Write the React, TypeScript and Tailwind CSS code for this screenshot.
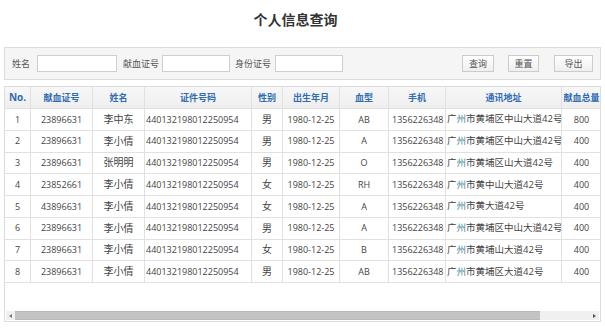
import clsx from "clsx";

type Donor = {
  no: number;
  card: string;
  name: string;
  idNo: string;
  sex: string;
  birth: string;
  blood: string;
  phone: string;
  address: string;
  total: number;
};

const donors: Donor[] = [
  { no: 1, card: "23896631", name: "李中东", idNo: "440132198012250954", sex: "男", birth: "1980-12-25", blood: "AB", phone: "1356226348", address: "广州市黄埔区中山大道42号", total: 800 },
  { no: 2, card: "23896631", name: "李小倩", idNo: "440132198012250954", sex: "男", birth: "1980-12-25", blood: "A", phone: "1356226348", address: "广州市黄埔区中山大道42号", total: 400 },
  { no: 3, card: "23896631", name: "张明明", idNo: "440132198012250954", sex: "男", birth: "1980-12-25", blood: "O", phone: "1356226348", address: "广州市黄埔区山大道42号", total: 400 },
  { no: 4, card: "23852661", name: "李小倩", idNo: "440132198012250954", sex: "女", birth: "1980-12-25", blood: "RH", phone: "1356226348", address: "广州市黄中山大道42号", total: 400 },
  { no: 5, card: "43896631", name: "李小倩", idNo: "440132198012250954", sex: "女", birth: "1980-12-25", blood: "A", phone: "1356226348", address: "广州市黄大道42号", total: 400 },
  { no: 6, card: "23896631", name: "李小倩", idNo: "440132198012250954", sex: "男", birth: "1980-12-25", blood: "A", phone: "1356226348", address: "广州市黄埔区中山大道42号", total: 400 },
  { no: 7, card: "23896631", name: "李小倩", idNo: "440132198012250954", sex: "女", birth: "1980-12-25", blood: "B", phone: "1356226348", address: "广州市黄埔山大道42号", total: 400 },
  { no: 8, card: "23896631", name: "李小倩", idNo: "440132198012250954", sex: "男", birth: "1980-12-25", blood: "AB", phone: "1356226348", address: "广州市黄埔区大道42号", total: 400 },
];

const headers = ["No.", "献血证号", "姓名", "证件号码", "性别", "出生年月", "血型", "手机", "通讯地址", "献血总量"];

// column widths taken from the border positions in the screenshot
const cols = "grid grid-cols-[26px_62px_52px_107px_31px_57px_49px_57px_116px_40px] w-[597px]";

const cell = "flex items-center justify-center border-r border-b border-[#e1e1e1] whitespace-nowrap overflow-hidden";

const Field = ({ label, width, gap }: { label: string; width: string; gap: string }) => (
  <>
    <span className={clsx("text-[9px] text-[#555]", gap)}>{label}</span>
    <input
      className={clsx("h-[17px] border border-[#cfcfcf] bg-white outline-none", width)}
      type="text"
    />
  </>
);

const Button = ({ label, className }: { label: string; className: string }) => (
  <button
    className={clsx(
      "h-[17px] border border-[#cccccc] bg-gradient-to-b from-white to-[#efefef] text-[9px] text-[#555] flex items-center justify-center",
      className
    )}
  >
    {label}
  </button>
);

const Address = ({ text }: { text: string }) => (
  <span className="text-[9.5px]">
    {text[0]}
    <span className="text-[#3b8a96]">{text[1]}</span>
    {text.slice(2)}
  </span>
);

export default function App() {
  return (
    <div className="w-[605px] h-[328px] bg-white overflow-hidden text-[#444] font-['Open_Sans','Noto_Sans_CJK_SC',sans-serif]">
      <h1 className="h-[47px] pb-[8px] pr-[14px] flex items-center justify-center text-[14px] font-bold text-[#333]">
        个人信息查询
      </h1>

      <div className="mx-[4px] h-[33px] border border-[#dcdcdc] bg-[#f5f5f5] flex items-center">
        <Field label="姓名" width="w-[80px]" gap="ml-[7px] mr-[7px]" />
        <Field label="献血证号" width="w-[68px]" gap="ml-[6px] mr-[3px]" />
        <Field label="身份证号" width="w-[68px]" gap="ml-[5px] mr-[4px]" />
        <Button label="查询" className="ml-auto w-[32px]" />
        <Button label="重置" className="ml-[14px] w-[31px]" />
        <Button label="导出" className="ml-[15px] mr-[7px] w-[39px]" />
      </div>

      <div className="mx-[4px] mt-[6px] h-[236px] border border-[#dcdcdc] flex flex-col overflow-hidden">
        <div className={clsx(cols, "h-[22px] bg-gradient-to-b from-[#f7f7f7] to-[#eeeeee] text-[9px] font-bold text-[#2f6cb3]")}>
          {headers.map((h) => (
            <div key={h} className={clsx(cell, h === "No." && "text-[10px]")}>
              {h}
            </div>
          ))}
        </div>

        {donors.map((d) => (
          <div key={d.no} className={clsx(cols, "h-[21.75px] text-[9px]")}>
            <div className={cell}>{d.no}</div>
            <div className={cell}>{d.card}</div>
            <div className={clsx(cell, "text-[10px]")}>{d.name}</div>
            <div className={clsx(cell, "justify-start pl-[1px]")}>{d.idNo}</div>
            <div className={clsx(cell, "text-[10px]")}>{d.sex}</div>
            <div className={cell}>{d.birth}</div>
            <div className={cell}>{d.blood}</div>
            <div className={clsx(cell, "justify-start pl-[3px]")}>{d.phone}</div>
            <div className={clsx(cell, "justify-start pl-[1px]")}>
              <Address text={d.address} />
            </div>
            <div className={cell}>{d.total}</div>
          </div>
        ))}

        <div className="flex-1" />

        <div className="h-[9px] mb-[1px] mx-[1px] flex bg-[#f0f0f0]">
          <div className="w-[9px] flex items-center justify-center">
            <span className="w-0 h-0 border-y-[2.5px] border-y-transparent border-r-[3px] border-r-[#777]" />
          </div>
          <div className="w-[525px] bg-[#c3c3c3] border-y border-[#b8b8b8]" />
          <div className="flex-1 flex items-center justify-end pr-[3px]">
            <span className="w-0 h-0 border-y-[2.5px] border-y-transparent border-l-[3px] border-l-[#555]" />
          </div>
        </div>
      </div>
    </div>
  );
}
